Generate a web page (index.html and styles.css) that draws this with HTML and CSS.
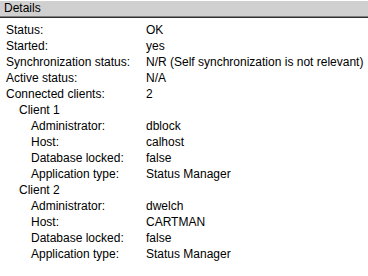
FILE: index.html
```html
<!DOCTYPE html>
<html lang="en">
<head>
    <meta charset="UTF-8">
    <title>Details</title>
    <link rel="stylesheet" href="styles.css">
</head>
<body>
    <div class="panel">
        <div class="panel-header">Details</div>
        <div class="details">
            <div class="row"><span class="label">Status:</span><span>OK</span></div>
            <div class="row"><span class="label">Started:</span><span>yes</span></div>
            <div class="row"><span class="label">Synchronization status:</span><span>N/R (Self synchronization is not relevant)</span></div>
            <div class="row"><span class="label">Active status:</span><span>N/A</span></div>
            <div class="row"><span class="label">Connected clients:</span><span>2</span></div>

            <div class="client">Client 1</div>
            <div class="row sub"><span class="label">Administrator:</span><span>dblock</span></div>
            <div class="row sub"><span class="label">Host:</span><span>calhost</span></div>
            <div class="row sub"><span class="label">Database locked:</span><span>false</span></div>
            <div class="row sub"><span class="label">Application type:</span><span>Status Manager</span></div>

            <div class="client">Client 2</div>
            <div class="row sub"><span class="label">Administrator:</span><span>dwelch</span></div>
            <div class="row sub"><span class="label">Host:</span><span>CARTMAN</span></div>
            <div class="row sub"><span class="label">Database locked:</span><span>false</span></div>
            <div class="row sub"><span class="label">Application type:</span><span>Status Manager</span></div>
        </div>
    </div>
</body>
</html>
```

FILE: styles.css
```css
body {
    margin: 0;
    padding: 0;
    background: #ffffff;
    font-family: "Liberation Sans", Arial, sans-serif;
    font-size: 12px;
    color: #000000;
}
.panel {
    width: 368px;
    height: 276px;
    overflow: hidden;
}
.panel-header {
    height: 15px;
    line-height: 15px;
    padding-left: 4px;
    background: #d0d0d0;
    border-top: 1px solid #ffffff;
    border-bottom: 1px solid #808080;
    box-shadow: 0 1px 0 #303030;
}
.details {
    padding-top: 5px;
}
.row {
    display: flex;
    height: 16px;
    line-height: 16px;
    white-space: nowrap;
}
.label {
    width: 140px;
    padding-left: 6px;
    flex-shrink: 0;
}
.row.sub .label {
    width: 115px;
    padding-left: 31px;
}
.client {
    height: 16px;
    line-height: 16px;
    padding-left: 19px;
}
```
